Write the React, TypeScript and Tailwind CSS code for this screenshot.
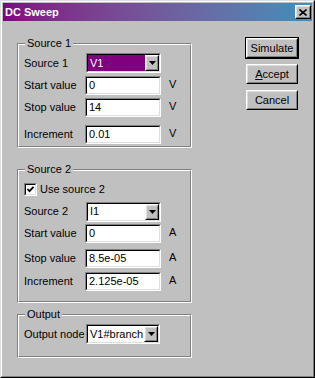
import React from 'react';

const font = "font-['Liberation_Sans',Arial,sans-serif]";

function Raised({ className = '', children }: { className?: string; children?: React.ReactNode }) {
  return (
    <div className={`border border-t-white border-l-white border-r-black border-b-black bg-[#c0c0c0] ${className}`}>
      <div className="w-full h-full border border-t-[#dfdfdf] border-l-[#dfdfdf] border-r-[#808080] border-b-[#808080] flex items-center justify-center">
        {children}
      </div>
    </div>
  );
}

function Sunken({ className = '', children }: { className?: string; children?: React.ReactNode }) {
  return (
    <div className={`border border-t-[#808080] border-l-[#808080] border-r-white border-b-white ${className}`}>
      <div className="w-full h-full border border-t-black border-l-black border-r-[#dfdfdf] border-b-[#dfdfdf] bg-white flex">
        {children}
      </div>
    </div>
  );
}

function Arrow() {
  return (
    <svg width="7" height="4" viewBox="0 0 7 4">
      <polygon points="0,0 7,0 3.5,4" fill="black" />
    </svg>
  );
}

function TextBox({ value }: { value: string }) {
  return (
    <Sunken className="w-[76px] h-[19px]">
      <span className="pl-[2px] leading-[15px]">{value}</span>
    </Sunken>
  );
}

function Combo({ value, selected = false, w = 'w-[75px]' }: { value: string; selected?: boolean; w?: string }) {
  return (
    <Sunken className={`${w} h-[20px] ml-px`}>
      <div className={`flex-1 flex items-center pl-[2px] ${selected ? 'bg-[#800080] text-white' : ''}`}>{value}</div>
      <Raised className="w-[14px] h-full">
        <Arrow />
      </Raised>
    </Sunken>
  );
}

function Row({ label, children, unit, className = '' }: { label: string; children: React.ReactNode; unit?: string; className?: string }) {
  return (
    <div className={`flex items-center ${className}`}>
      <span className="w-[61px]">{label}</span>
      {children}
      {unit && <span className="ml-[8px] -mt-[2px]">{unit}</span>}
    </div>
  );
}

function Group({ legend, h, className = '', children }: { legend: string; h: string; className?: string; children: React.ReactNode }) {
  return (
    <div className={`relative w-[175px] ${h} border border-t-[#808080] border-l-[#808080] border-r-white border-b-white ${className}`}>
      <div className="h-full border border-t-white border-l-white border-r-[#808080] border-b-[#808080] pl-[5px]">
        {children}
      </div>
      <span className="absolute left-[7px] -top-[8px] px-[2px] bg-[#c0c0c0] leading-[14px]">{legend}</span>
    </div>
  );
}

export default function App() {
  return (
    <div className={`w-[315px] h-[378px] bg-[#c0c0c0] text-[11px] text-black ${font} border border-t-[#dfdfdf] border-l-[#dfdfdf] border-r-black border-b-black`}>
      <div className="h-full border border-t-white border-l-white border-r-[#808080] border-b-[#808080] p-px flex flex-col">
        <div className="h-[18px] flex items-center justify-between pl-[2px] pr-[1px] bg-gradient-to-r from-[#800080] to-[#3890ba]">
          <span className="text-white font-bold">DC Sweep</span>
          <Raised className="w-[16px] h-[14px]">
            <svg width="8" height="7" viewBox="0 0 8 7">
              <path d="M0.5 0.5L7.5 6.5M7.5 0.5L0.5 6.5" stroke="black" strokeWidth="1.6" />
            </svg>
          </Raised>
        </div>

        <div className="flex-1 flex pl-[14px]">
          <div className="flex flex-col">
            <Group legend="Source 1" h="h-[105px]" className="mt-[22px]">
              <Row label="Source 1" className="mt-[8px]">
                <Combo value="V1" selected />
              </Row>
              <Row label="Start value" unit="V" className="mt-[3px]">
                <TextBox value="0" />
              </Row>
              <Row label="Stop value" unit="V" className="mt-[3px]">
                <TextBox value="14" />
              </Row>
              <Row label="Increment" unit="V" className="mt-[8px]">
                <TextBox value="0.01" />
              </Row>
            </Group>

            <Group legend="Source 2" h="h-[134px]" className="mt-[21px]">
              <div className="flex items-center gap-[3px] mt-[10px]">
                <Sunken className="w-[13px] h-[13px]">
                  <svg width="9" height="9" viewBox="0 0 9 9" className="m-auto">
                    <path d="M1.5 4L3.5 6.2L7.5 1.8" stroke="black" strokeWidth="1.8" fill="none" />
                  </svg>
                </Sunken>
                <span>Use source 2</span>
              </div>
              <Row label="Source 2" className="mt-[4px]">
                <Combo value="I1" />
              </Row>
              <Row label="Start value" unit="A" className="mt-[2px]">
                <TextBox value="0" />
              </Row>
              <Row label="Stop value" unit="A" className="mt-[6px]">
                <TextBox value="8.5e-05" />
              </Row>
              <Row label="Increment" unit="A" className="mt-[4px]">
                <TextBox value="2.125e-05" />
              </Row>
            </Group>

            <Group legend="Output" h="h-[44px]" className="mt-[11px]">
              <Row label="Output node" className="mt-[8px]">
                <Combo value="V1#branch" w="w-[74px]" />
              </Row>
            </Group>
          </div>

          <div className="flex flex-col ml-[53px] mt-[16px]">
            <div className="border border-black">
              <Raised className="w-[52px] h-[20px]">Simulate</Raised>
            </div>
            <Raised className="w-[52px] h-[20px] ml-px mt-[5px]">
              <span>
                <span className="underline">A</span>ccept
              </span>
            </Raised>
            <Raised className="w-[52px] h-[20px] ml-px mt-[6px]">Cancel</Raised>
          </div>
        </div>
      </div>
    </div>
  );
}
